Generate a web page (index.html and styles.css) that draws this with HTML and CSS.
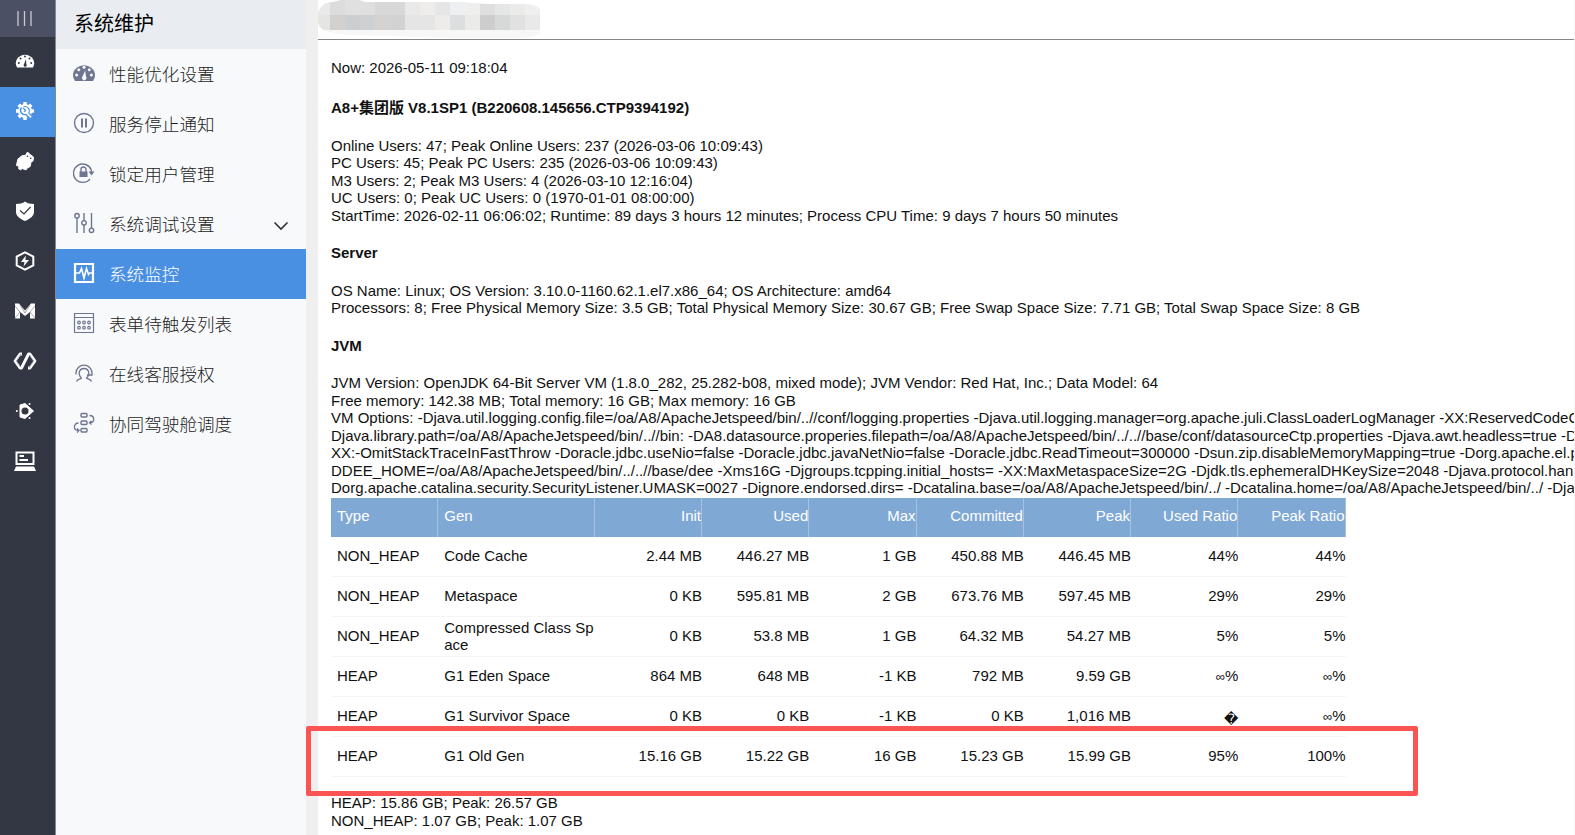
FILE: index.html
```html
<!DOCTYPE html>
<html lang="zh-CN">
<head>
    <meta charset="UTF-8">
    <meta name="viewport" content="width=device-width, initial-scale=1.0">
    <title>系统监控</title>
    <link rel="stylesheet" href="styles.css">
</head>
<body>
    <nav class="rail">
        <a class="rail-toggle"><svg width="18" height="18" viewBox="0 0 18 18"><path d="M2 1v15M8.500 1v15M15 1v15" stroke="#c9cbd3" stroke-width="1.300"/></svg></a>
        <a class="rail-item"><svg width="20" height="20" viewBox="0 0 20 20"><path d="M2 16.500A9.200 8.500 0 1 1 18 16.500z" fill="#fff"/><g fill="#333743"><circle cx="3.800" cy="12" r="1"/><circle cx="5.500" cy="7.600" r="1"/><circle cx="10" cy="5.500" r="1"/><circle cx="14.500" cy="7.600" r="1"/><circle cx="16.200" cy="12" r="1"/><path d="M11 8l.3 5a1.600 1.600 0 1 1-2.200 0z"/></g></svg></a>
        <a class="rail-item active"><svg width="20" height="20" viewBox="0 0 20 20"><circle cx="10" cy="10" r="7" fill="#fff"/><path d="M10 1v18M1 10h18M3.700 3.700l12.600 12.600M16.300 3.700L3.700 16.300" stroke="#fff" stroke-width="3.400"/><path d="M6.600 6.500a4.300 4.300 0 0 0 4.200 7l5.700 5.200" fill="none" stroke="#4a90e2" stroke-width="1.400"/><path d="M8.500 5.800a4.300 4.300 0 0 1 5.200 6.200l4 4" fill="none" stroke="#4a90e2" stroke-width="1.100"/><path d="M8 7l2.600 2.200-1.600 1.600" fill="none" stroke="#4a90e2" stroke-width="1.200"/></svg></a>
        <a class="rail-item"><svg width="20" height="20" viewBox="0 0 20 20"><path d="M12.500 1l2 2 4 3-.5 4-2 1-.8 4.500-3 1.500-1 1.800-2-.5-2-.8-1.500 1.300-2-1 .3-2.500-2.500-.8L2 12l1-4 4-3.200 3.500-.5z" fill="#fff" stroke="#fff" stroke-linejoin="round"/><circle cx="12.500" cy="5.300" r=".8" fill="#333743"/><circle cx="15.700" cy="7.300" r=".8" fill="#333743"/></svg></a>
        <a class="rail-item"><svg width="20" height="20" viewBox="0 0 20 20"><path d="M10 .5c2.500 1.800 5.500 2.400 9 2.500v8c0 4-4 7-9 9-5-2-9-5-9-9V3c3.500-.1 6.500-.7 9-2.500z" fill="#fff"/><path d="M5 9.500l4 3.500 6.500-7" fill="none" stroke="#333743" stroke-width="1.200"/></svg></a>
        <a class="rail-item"><svg width="20" height="20" viewBox="0 0 20 20"><path d="M10 1.300l8.300 4.200v9l-8.300 4.200-8.300-4.200v-9z" fill="none" stroke="#fff" stroke-width="2"/><path d="M10.800 4.500L6 11h3.500l-1 4.500L14 9h-3.500z" fill="#fff"/></svg></a>
        <a class="rail-item"><svg width="20" height="20" viewBox="0 0 20 20"><path d="M0 2.500h4l6 7 6-7h4v15h-5V11l-5 4-5-4v6.500H0z" fill="#fff"/><path d="M0 5l5 6-5 6M20 5l-5 6 5 6M5 4l5 8 5-8" fill="none" stroke="#7c808c" stroke-width=".7"/></svg></a>
        <a class="rail-item"><svg width="24" height="20" viewBox="0 0 24 20"><path d="M9 3H7L2 10l5 7h1.500L15.500 3H17l5 7-5 7h-2" fill="none" stroke="#fff" stroke-width="2.800" stroke-linejoin="round"/><path d="M8 3L3.500 10l4 6M16 17l4.500-7-4-6" fill="none" stroke="#7c808c" stroke-width=".7"/></svg></a>
        <a class="rail-item"><svg width="20" height="20" viewBox="0 0 20 20"><path d="M5 4l5-1.500 8.500 7.500-8.500 7.500L5 16z" fill="#fff" stroke="#fff" stroke-linejoin="round"/><circle cx="10" cy="10" r="3.500" fill="#333743"/><circle cx="1.800" cy="10" r="1" fill="#fff"/><circle cx="14.500" cy="3" r="1" fill="#fff"/><circle cx="14.500" cy="17" r="1" fill="#fff"/></svg></a>
        <a class="rail-item"><svg width="22" height="20" viewBox="0 0 22 20"><path d="M2.500 1.500h17V13h-17z" fill="none" stroke="#fff" stroke-width="2"/><path d="M5.500 5H10M5.500 9H14" stroke="#fff" stroke-width="2.200"/><path d="M2 15.500h18l2 4.500H0z" fill="#fff"/></svg></a>
    </nav>

    <aside class="sidebar">
        <h2>系统维护</h2>
        <ul>
            <li>
                <svg viewBox="0 0 22 22"><path d="M2 19A11 10 0 1 1 20 19z" fill="#6d7590"/><g fill="#f8f9fb"><circle cx="3.600" cy="13" r="1.500"/><circle cx="5.800" cy="7.700" r="1.500"/><circle cx="11" cy="5.300" r="1.500"/><circle cx="16.200" cy="7.700" r="1.500"/><circle cx="18.400" cy="13" r="1.500"/><path d="M12.200 8.500l.8 6a2.300 2.300 0 1 1-3.700.3z"/></g></svg>
                <span>性能优化设置</span>
            </li>
            <li>
                <svg viewBox="0 0 22 22"><circle cx="11" cy="11" r="9.500"/><path d="M9 6.500v9M13 6.500v9" stroke-width="2"/></svg>
                <span>服务停止通知</span>
            </li>
            <li>
                <svg viewBox="0 0 22 22"><path d="M18.300 8A9.200 9.200 0 1 0 17 16.800M18.300 8v3"/><path d="M15.500 9.500h6l-3 4z" fill="#6d7590" stroke="none"/><path d="M6.500 9.500h8v5.500h-8z" fill="#6d7590" stroke="none"/><path d="M8 10V7.500a2.500 2.500 0 0 1 5 0V10"/></svg>
                <span>锁定用户管理</span>
            </li>
            <li>
                <svg viewBox="0 0 22 22"><path d="M4 6v15M11 1v7.500M11 13v8M18.500 1v15"/><circle cx="4" cy="3.700" r="2.200"/><circle cx="11" cy="10.800" r="2.200"/><circle cx="18.500" cy="18.300" r="2.200"/></svg>
                <span>系统调试设置</span>
                <svg class="arrow" viewBox="0 0 16 10"><path d="M1.500 1.500L8 8l6.500-6.500"/></svg>
            </li>
            <li class="active">
                <svg viewBox="0 0 22 22"><path d="M2 2h18v18H2z" stroke-width="2.200"/><path d="M3 11h3.500l2-4.500L11 16l2.500-9.500 2 6 1-1.500H19" stroke-width="1.600"/></svg>
                <span>系统监控</span>
            </li>
            <li>
                <svg viewBox="0 0 22 22"><path d="M1.500 1.500h19v19h-19zM1.500 5.500h19" stroke-width="1.200"/><g stroke-width="1.200"><circle cx="6" cy="10.500" r="1.300"/><circle cx="11" cy="10.500" r="1.300"/><circle cx="16" cy="10.500" r="1.300"/><circle cx="6" cy="15.700" r="1.300"/><circle cx="11" cy="15.700" r="1.300"/><circle cx="16" cy="15.700" r="1.300"/></g></svg>
                <span>表单待触发列表</span>
            </li>
            <li>
                <svg viewBox="0 0 22 22"><path d="M3 12.500V11a8 7.800 0 0 1 16 0v2h-5M8.500 16C4.500 12.500 6 6.500 11 6.500s6.500 6 2.500 9.500c1 1 4.500 1 5 3.500M3.500 19.500c.5-2.500 4.500-2 5-3.500" stroke-width="1.300"/></svg>
                <span>在线客服授权</span>
            </li>
            <li>
                <svg viewBox="0 0 22 22"><rect x="8" y="1.500" width="6" height="3.500" rx="1"/><rect x="8" y="9" width="6" height="3.500" rx="1"/><rect x="8" y="16.500" width="6" height="3.500" rx="1"/><path d="M16.500 3.500c5.500 0 5.500 7 .5 7.300M18.500 9l-2 1.800 2 1.700M5.500 11c-5.500 0-5.500 7.500 0 7.500M4 16.500l2 2-2 2" stroke-width="1.300"/></svg>
                <span>协同驾驶舱调度</span>
            </li>
        </ul>
    </aside>

    <main class="main">
        <header class="topbar">
            <svg class="mosaic" width="224" height="38" viewBox="0 0 224 38">
                <clipPath id="blob"><path d="M0 17C1 8 7 2 16 2L24 0h18l6 2h95l25 2h40q10 0 15 5v21q2 3-2 4-6 4-16 4h-70l-65-2Q10 36 4 28 0 24 0 17z"/></clipPath>
                <g clip-path="url(#blob)" shape-rendering="crispEdges">
                    <path fill="#f7f7f7" d="M0 0h224v38H0z"/>
                    <path fill="#e9e9e9" d="M0 0h13v15H0z"/><path fill="#dcdcdd" d="M13 0h15v15H13z"/><path fill="#e1e0e0" d="M28 0h15v15H28z"/><path fill="#dfdfe0" d="M43 0h15v15H43z"/><path fill="#d8d8d8" d="M58 0h30v15H58z"/><path fill="#e9e9ea" d="M88 0h15v15H88z"/><path fill="#eeedeb" d="M103 0h15v15h-15z"/><path fill="#e6e6e7" d="M118 0h15v15h-15z"/><path fill="#edeff2" d="M133 0h15v15h-15z"/><path fill="#eeeeed" d="M148 0h15v15h-15z"/><path fill="#dfdfdf" d="M163 0h15v15h-15z"/><path fill="#e5e7e7" d="M178 0h15v15h-15z"/><path fill="#ebebea" d="M193 0h15v15h-15z"/><path fill="#efefef" d="M208 0h15v15h-15z"/>
                    <path fill="#e5e5e4" d="M0 15h13v15H0z"/><path fill="#d3d1cf" d="M13 15h15v15H13z"/><path fill="#cdcecf" d="M28 15h15v15H28z"/><path fill="#ced0d2" d="M43 15h15v15H43z"/><path fill="#d5d3d1" d="M58 15h15v15H58z"/><path fill="#d2d2d2" d="M73 15h15v15H73z"/><path fill="#e5e5e6" d="M88 15h30v15H88z"/><path fill="#edece8" d="M118 15h15v15h-15z"/><path fill="#dcdee0" d="M133 15h15v15h-15z"/><path fill="#ebebea" d="M148 15h15v15h-15z"/><path fill="#cdcdcd" d="M163 15h15v15h-15z"/><path fill="#d6d9d8" d="M178 15h15v15h-15z"/><path fill="#e1e1e2" d="M193 15h15v15h-15z"/><path fill="#e9e9e9" d="M208 15h15v15h-15z"/>
                </g>
            </svg>
        </header>
        <div class="content">
            <p>Now: 2026-05-11 09:18:04</p>
            <h3 class="version">A8+集团版 V8.1SP1 (B220608.145656.CTP9394192)</h3>
            <p>Online Users: 47; Peak Online Users: 237 (2026-03-06 10:09:43)<br>
            PC Users: 45; Peak PC Users: 235 (2026-03-06 10:09:43)<br>
            M3 Users: 2; Peak M3 Users: 4 (2026-03-10 12:16:04)<br>
            UC Users: 0; Peak UC Users: 0 (1970-01-01 08:00:00)<br>
            StartTime: 2026-02-11 06:06:02; Runtime: 89 days 3 hours 12 minutes; Process CPU Time: 9 days 7 hours 50 minutes</p>
            <h3>Server</h3>
            <p>OS Name: Linux; OS Version: 3.10.0-1160.62.1.el7.x86_64; OS Architecture: amd64<br>
            Processors: 8; Free Physical Memory Size: 3.5 GB; Total Physical Memory Size: 30.67 GB; Free Swap Space Size: 7.71 GB; Total Swap Space Size: 8 GB</p>
            <h3>JVM</h3>
            <p>JVM Version: OpenJDK 64-Bit Server VM (1.8.0_282, 25.282-b08, mixed mode); JVM Vendor: Red Hat, Inc.; Data Model: 64<br>
            Free memory: 142.38 MB; Total memory: 16 GB; Max memory: 16 GB<br>
            VM Options: -Djava.util.logging.config.file=/oa/A8/ApacheJetspeed/bin/..//conf/logging.properties -Djava.util.logging.manager=org.apache.juli.ClassLoaderLogManager -XX:ReservedCodeC<br>
            Djava.library.path=/oa/A8/ApacheJetspeed/bin/..//bin: -DA8.datasource.properies.filepath=/oa/A8/ApacheJetspeed/bin/../..//base/conf/datasourceCtp.properties -Djava.awt.headless=true -D<br>
            XX:-OmitStackTraceInFastThrow -Doracle.jdbc.useNio=false -Doracle.jdbc.javaNetNio=false -Doracle.jdbc.ReadTimeout=300000 -Dsun.zip.disableMemoryMapping=true -Dorg.apache.el.p<br>
            DDEE_HOME=/oa/A8/ApacheJetspeed/bin/../..//base/dee -Xms16G -Djgroups.tcpping.initial_hosts= -XX:MaxMetaspaceSize=2G -Djdk.tls.ephemeralDHKeySize=2048 -Djava.protocol.han<br>
            Dorg.apache.catalina.security.SecurityListener.UMASK=0027 -Dignore.endorsed.dirs= -Dcatalina.base=/oa/A8/ApacheJetspeed/bin/../ -Dcatalina.home=/oa/A8/ApacheJetspeed/bin/../ -Dja</p>
            <table>
                <colgroup><col><col class="gen"><col><col><col><col><col><col><col></colgroup>
                <thead>
                    <tr><th>Type</th><th>Gen</th><th>Init</th><th>Used</th><th>Max</th><th>Committed</th><th>Peak</th><th>Used Ratio</th><th>Peak Ratio</th></tr>
                </thead>
                <tbody>
                    <tr><td>NON_HEAP</td><td>Code Cache</td><td>2.44 MB</td><td>446.27 MB</td><td>1 GB</td><td>450.88 MB</td><td>446.45 MB</td><td>44%</td><td>44%</td></tr>
                    <tr><td>NON_HEAP</td><td>Metaspace</td><td>0 KB</td><td>595.81 MB</td><td>2 GB</td><td>673.76 MB</td><td>597.45 MB</td><td>29%</td><td>29%</td></tr>
                    <tr><td>NON_HEAP</td><td>Compressed Class Space</td><td>0 KB</td><td>53.8 MB</td><td>1 GB</td><td>64.32 MB</td><td>54.27 MB</td><td>5%</td><td>5%</td></tr>
                    <tr><td>HEAP</td><td>G1 Eden Space</td><td>864 MB</td><td>648 MB</td><td>-1 KB</td><td>792 MB</td><td>9.59 GB</td><td><span class="inf">∞</span>%</td><td><span class="inf">∞</span>%</td></tr>
                    <tr><td>HEAP</td><td>G1 Survivor Space</td><td>0 KB</td><td>0 KB</td><td>-1 KB</td><td>0 KB</td><td>1,016 MB</td><td><span class="bad">�</span></td><td><span class="inf">∞</span>%</td></tr>
                    <tr><td>HEAP</td><td>G1 Old Gen</td><td>15.16 GB</td><td>15.22 GB</td><td>16 GB</td><td>15.23 GB</td><td>15.99 GB</td><td>95%</td><td>100%</td></tr>
                </tbody>
            </table>
            <p class="total">HEAP: 15.86 GB; Peak: 26.57 GB<br>
            NON_HEAP: 1.07 GB; Peak: 1.07 GB</p>
        </div>
    </main>
    <div class="highlight"></div>
</body>
</html>
```
FILE: styles.css
```css
* {
    box-sizing: border-box;
}
body {
    margin: 0;
    display: flex;
    height: 835px;
    overflow: hidden;
    position: relative;
    background-color: #efefef;
    color: #111;
    font-family: "Liberation Sans", "Noto Sans CJK SC", sans-serif;
    font-size: 15px;
}
.rail {
    flex: none;
    width: 56px;
    background-color: #333743;
    border-right: 1px solid #858892;
}
.rail-toggle, .rail-item {
    display: flex;
    align-items: center;
    justify-content: center;
    height: 50px;
    padding: 0 5px 2px 0;
}
.rail-toggle {
    height: 37px;
    padding-bottom: 0;
    background-color: #4c5064;
}
.rail-item.active {
    background-color: #4a90e2;
}
.sidebar {
    flex: none;
    width: 250px;
    background-color: #f8f9fb;
    font-family: "Noto Sans CJK SC", sans-serif;
}
.sidebar h2 {
    margin: 0;
    height: 49px;
    padding-left: 18px;
    background-color: #e9ecf1;
    color: #000;
    font-size: 20px;
    font-weight: 400;
    line-height: 46px;
}
.sidebar ul {
    list-style: none;
    margin: 0;
    padding: 0;
}
.sidebar li {
    display: flex;
    align-items: center;
    height: 50px;
    padding: 0 18px 2px 17px;
    color: #1c1c1c;
    font-size: 17.600px;
    font-weight: 300;
}
.sidebar li svg {
    width: 22px;
    height: 22px;
    margin-right: 14px;
    fill: none;
    stroke: #6d7590;
    stroke-width: 1.400;
}
.sidebar li svg g[fill], .sidebar li path[fill] {
    stroke: none;
}
.sidebar li .arrow {
    width: 16px;
    height: 10px;
    margin: 5px -1px 0 auto;
    stroke: #333;
    stroke-width: 1.600;
}
.sidebar li.active {
    background-color: #4a90e2;
    color: #fff;
}
.sidebar li.active svg {
    stroke: #fff;
}
.main {
    flex: 1;
    min-width: 0;
    margin-left: 12px;
    background-color: #fff;
    border-right: 1px solid #f5f5f5;
    overflow: hidden;
}
.topbar {
    height: 40px;
    border-bottom: 1px solid #868686;
}
.mosaic {
    display: block;
    margin-left: -1px;
}
.content {
    padding: 19px 0 0 13px;
    line-height: 17.500px;
    white-space: nowrap;
}
.content p {
    margin: 0;
}
.content h3 {
    margin: 20px 0;
    font-size: 15px;
    line-height: 17.500px;
}
.content .version {
    margin: 22px 0 20.700px;
}
table {
    width: 1014.500px;
    margin-top: 1px;
    table-layout: fixed;
    border-collapse: separate;
    border-spacing: 0;
}
.gen {
    width: 156.500px;
}
th, td {
    height: 40px;
    padding: 0 0 0 6px;
    text-align: right;
    font-weight: 400;
    white-space: normal;
    word-break: break-all;
    border-bottom: 1px solid #f5f5f5;
}
th {
    height: 39px;
    padding-bottom: 3px;
    background-color: #80a8d4;
    color: #fff;
    border-bottom: none;
    border-right: 1px solid #a6c2e0;
}
th:nth-child(-n+2), td:nth-child(-n+2) {
    text-align: left;
}
.inf {
    font-size: 13px;
    line-height: 1;
}
.bad {
    position: relative;
    top: 3px;
    font-family: "DejaVu Sans", sans-serif;
    font-size: 14px;
    line-height: 1;
}
.content .total {
    margin-top: 17.500px;
}
/* callout round the old gen row */
.highlight {
    position: absolute;
    left: 306px;
    top: 726px;
    width: 1112px;
    height: 70px;
    border: 5px solid #fc5353;
    border-radius: 2px;
}
```
